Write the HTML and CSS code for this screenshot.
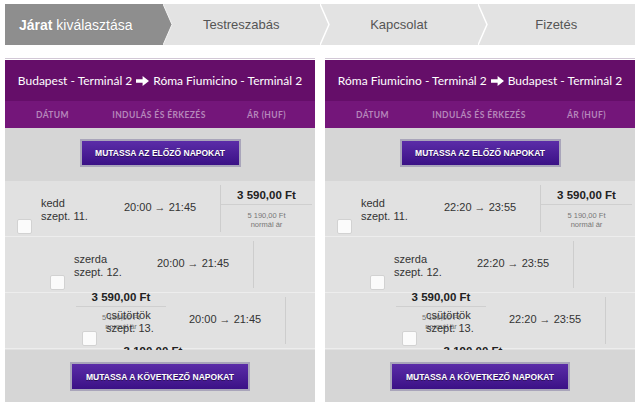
FILE: index.html
```html
<!DOCTYPE html>
<html lang="hu">
<head>
<meta charset="utf-8">
<title>Járat kiválasztása</title>
<link rel="stylesheet" href="styles.css">
</head>
<body>
<div class="page">
  <nav class="steps">
    <div class="step step-active"><span><b>Járat</b> kiválasztása</span>
      <svg class="chev" viewBox="0 0 10 41" preserveAspectRatio="none"><polygon points="0,0 9,20.5 0,41" fill="#8e8e8e"/><polyline points="0,0 9,20.5 0,41" fill="none" stroke="#f4f4f4" stroke-width="1"/></svg>
    </div>
    <div class="step"><span>Testreszabás</span>
      <svg class="chev" viewBox="0 0 10 41" preserveAspectRatio="none"><polyline points="0,0 9,20.5 0,41" fill="none" stroke="#ffffff" stroke-width="1.5"/></svg>
    </div>
    <div class="step"><span>Kapcsolat</span>
      <svg class="chev" viewBox="0 0 10 41" preserveAspectRatio="none"><polyline points="0,0 9,20.5 0,41" fill="none" stroke="#ffffff" stroke-width="1.5"/></svg>
    </div>
    <div class="step"><span>Fizetés</span></div>
  </nav>

  <div class="panels">
    <section class="panel">
      <div class="panel-title">
        <span>Budapest - Terminál 2</span>
        <svg class="arrow" viewBox="0 0 13 10"><path d="M0 3.2H6.6V0L13 5L6.6 10V6.8H0Z" fill="#fff"/></svg>
        <span>Róma Fiumicino - Terminál 2</span>
      </div>
      <div class="cols"><span>DÁTUM</span><span>INDULÁS ÉS ÉRKEZÉS</span><span>ÁR (HUF)</span></div>
      <div class="panel-body">
        <div class="btn-row"><button class="btn btn-prev">MUTASSA AZ ELŐZŐ NAPOKAT</button></div>
        <div class="rows">
          <div class="row row-1">
            <div class="sel"><span class="cb"></span><div class="date">kedd<br>szept. 11.</div></div>
            <div class="time">20:00 → 21:45</div>
            <div class="fare"><div class="price">3 590,00 Ft</div><div class="old">5 190,00 Ft<br>normál ár</div></div>
          </div>
          <div class="row row-2">
            <div class="sel"><span class="cb"></span><div class="date">szerda<br>szept. 12.</div></div>
            <div class="time">20:00 → 21:45</div>
            <div class="fare fare-empty"></div>
          </div>
          <div class="row row-3">
            <div class="fare spill spill-a"><div class="price">3 590,00 Ft</div><div class="old">5 190,00 Ft<br>normál ár</div></div>
            <div class="line">
              <div class="sel"><span class="cb"></span><div class="date">csütörtök<br>szept. 13.</div></div>
              <div class="time">20:00 → 21:45</div>
              <div class="fare fare-empty"></div>
            </div>
            <div class="fare spill spill-b"><div class="price">3 190,00 Ft</div><div class="old">4 790,00 Ft<br>normál ár</div></div>
          </div>
        </div>
        <div class="btn-row btn-row-next"><button class="btn btn-next">MUTASSA A KÖVETKEZŐ NAPOKAT</button></div>
      </div>
    </section>

    <section class="panel">
      <div class="panel-title">
        <span>Róma Fiumicino - Terminál 2</span>
        <svg class="arrow" viewBox="0 0 13 10"><path d="M0 3.2H6.6V0L13 5L6.6 10V6.8H0Z" fill="#fff"/></svg>
        <span>Budapest - Terminál 2</span>
      </div>
      <div class="cols"><span>DÁTUM</span><span>INDULÁS ÉS ÉRKEZÉS</span><span>ÁR (HUF)</span></div>
      <div class="panel-body">
        <div class="btn-row"><button class="btn btn-prev">MUTASSA AZ ELŐZŐ NAPOKAT</button></div>
        <div class="rows">
          <div class="row row-1">
            <div class="sel"><span class="cb"></span><div class="date">kedd<br>szept. 11.</div></div>
            <div class="time">22:20 → 23:55</div>
            <div class="fare"><div class="price">3 590,00 Ft</div><div class="old">5 190,00 Ft<br>normál ár</div></div>
          </div>
          <div class="row row-2">
            <div class="sel"><span class="cb"></span><div class="date">szerda<br>szept. 12.</div></div>
            <div class="time">22:20 → 23:55</div>
            <div class="fare fare-empty"></div>
          </div>
          <div class="row row-3">
            <div class="fare spill spill-a"><div class="price">3 590,00 Ft</div><div class="old">5 190,00 Ft<br>normál ár</div></div>
            <div class="line">
              <div class="sel"><span class="cb"></span><div class="date">csütörtök<br>szept. 13.</div></div>
              <div class="time">22:20 → 23:55</div>
              <div class="fare fare-empty"></div>
            </div>
            <div class="fare spill spill-b"><div class="price">3 190,00 Ft</div><div class="old">4 790,00 Ft<br>normál ár</div></div>
          </div>
        </div>
        <div class="btn-row btn-row-next"><button class="btn btn-next">MUTASSA A KÖVETKEZŐ NAPOKAT</button></div>
      </div>
    </section>
  </div>
</div>
</body>
</html>
```

FILE: styles.css
```css
* { box-sizing: border-box; }

body {
  margin: 0;
  background: #ffffff;
  font-family: "Liberation Sans", Arial, sans-serif;
}

.page {
  width: 640px;
  padding: 4px 5px 0;
}

/* ---- step bar ---- */
.steps {
  display: flex;
  height: 41px;
  background: #e3e3e3;
}

.step {
  flex: 0 0 157.5px;
  position: relative;
  display: flex;
  align-items: center;
  justify-content: center;
  font-size: 13px;
  color: #555555;
}

.step-active {
  background: #8e8e8e;
  color: #ffffff;
  font-size: 14px;
  padding-right: 16px;
  z-index: 1;
  text-shadow: 0 0 1px rgba(0, 0, 0, 0.15);
}

.chev {
  position: absolute;
  top: 0;
  left: 100%;
  width: 10px;
  height: 41px;
  z-index: 2;
}

/* ---- panels ---- */
.panels {
  display: flex;
  gap: 10px;
  margin-top: 13px;
}

.panel {
  width: 310px;
  border-top: 1px solid #d2c8d6;
  padding-top: 1px;
}

.panel-title {
  height: 41px;
  background: #650e69;
  color: #ffffff;
  display: flex;
  align-items: center;
  justify-content: center;
  gap: 4px;
  font-family: Lato, "Open Sans", sans-serif;
  font-size: 12px;
  white-space: nowrap;
}

.arrow {
  width: 13px;
  height: 10px;
}

.cols {
  height: 27px;
  background: #74167a;
  display: grid;
  grid-template-columns: 95px 118px 97px;
  align-items: center;
  text-align: center;
  color: #b687bb;
  font-family: Lato, "Open Sans", sans-serif;
  font-weight: bold;
  font-size: 8.5px;
  letter-spacing: 0.4px;
}

.panel-body {
  background: #d6d6d6;
  padding: 11px 0 11px;
}

.btn-row {
  display: flex;
  justify-content: center;
}

.btn-row-next {
  margin-top: 12px;
}

.btn {
  height: 28px;
  border: 2px solid #a9a5ba;
  background: linear-gradient(#5b2ca8, #3b1186);
  color: #ffffff;
  font-family: "Liberation Sans", Arial, sans-serif;
  font-weight: bold;
  font-size: 8.5px;
  padding: 0;
  text-shadow: 0 1px 0 rgba(0, 0, 0, 0.45);
}

.btn-prev { width: 161px; }
.btn-next { width: 180px; height: 29px; }

/* ---- flight rows ---- */
.rows {
  margin-top: 14px;
  height: 169px;
  overflow: hidden;
  background: #e1e1e1;
}

.row {
  height: 56px;
  border-bottom: 1px solid #ededed;
  display: flex;
  color: #333333;
}

.row-1 { padding-left: 12px; }
.row-2 { padding-left: 45px; }

.row-3 {
  display: grid;
}

.row-3 > * {
  grid-area: 1 / 1;
  align-self: start;
}

.line {
  display: flex;
  margin-left: 77px;
}

.sel {
  width: 107px;
  display: flex;
  align-items: flex-start;
  flex: none;
}

.cb {
  width: 15px;
  height: 15px;
  flex: none;
  margin-top: 38px;
  background: #fbfbfb;
  border: 1px solid #d2d2d2;
  border-radius: 2px;
}

.date {
  margin-left: 9px;
  margin-top: 16px;
  font-size: 11px;
  line-height: 13px;
  white-space: nowrap;
}

.time {
  width: 96px;
  flex: none;
  margin-top: 20px;
  font-size: 11px;
  line-height: 13px;
  white-space: nowrap;
}

.fare {
  width: 92px;
  height: 47px;
  margin-top: 4px;
  border-left: 1px solid #cdcdcd;
  text-align: center;
  flex: none;
}

.fare-empty {
  width: 40px;
}

.price {
  font-weight: bold;
  font-size: 11.5px;
  line-height: 18px;
  padding-top: 1px;
  border-bottom: 1px solid #cfcfcf;
  color: #222222;
}

.old {
  font-size: 7.5px;
  line-height: 9px;
  padding-top: 6px;
  color: #777777;
}

.spill {
  border-left: none;
  width: 90px;
}

.spill-a {
  margin-left: 71px;
  margin-top: -6px;
}

.spill-b {
  margin-left: 103px;
  margin-top: 48px;
}
```
